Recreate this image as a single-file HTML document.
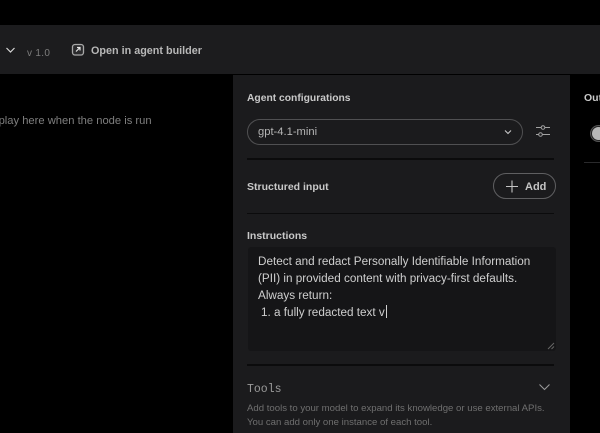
<!DOCTYPE html>
<html><head><meta charset="utf-8">
<style>
html,body{margin:0;padding:0;background:#000;}
#r{position:relative;width:600px;height:433px;overflow:hidden;background:#000;font-family:"Liberation Sans",sans-serif;filter:blur(.35px);}
#r div,#r svg{position:absolute;}
.t{white-space:nowrap;}
.h{font-size:10.5px;font-weight:700;color:#c9c9c9;line-height:14px;}
.l{height:1px;background:#0b0b0c;left:247px;width:307px;}
.b{font-size:11.72px;color:#cfcfcf;line-height:17px;left:258px;}
</style></head><body>
<div id="r">
<div style="left:0;top:25px;width:600px;height:49px;background:#1c1c1e"></div>
<div style="left:233px;top:75px;width:337px;height:358px;background:#1b1b1d"></div>

<svg style="left:5px;top:46px" width="11" height="9" viewBox="0 0 11 9"><path d="M1.5 2L5.5 6L9.5 2" fill="none" stroke="#d6d6d6" stroke-width="1.2"/></svg>
<div class="t" style="left:27px;top:47px;font-size:10px;line-height:13px;color:#7d7d7d;letter-spacing:.3px">v 1.0</div>
<svg style="left:71px;top:43px" width="14" height="14" viewBox="0 0 14 14"><rect x="1.500" y="1.500" width="11" height="10.500" rx="2.500" fill="#2a2a2c" stroke="#a8a8a8" stroke-width="1.300"/><path d="M5 8.500L9 4.500M6 4.500H9V7.500" fill="none" stroke="#e4e4e4" stroke-width="1.200"/></svg>
<div class="t" style="left:91px;top:44px;font-size:10.800px;font-weight:700;line-height:14px;color:#b8b8b8">Open in agent builder</div>

<div class="t" style="left:-9.500px;top:114px;font-size:11.200px;line-height:14px;color:#7f7f7f">isplay here when the node is run</div>

<div class="t h" style="left:247px;top:92px;font-size:10.300px">Agent configurations</div>
<div style="left:247px;top:119px;width:276px;height:26px;box-sizing:border-box;border:1px solid #505052;border-radius:13px"></div>
<div class="t" style="left:258px;top:125px;font-size:11.200px;line-height:15px;color:#b5b5b5">gpt-4.1-mini</div>
<svg style="left:503px;top:129px" width="10" height="7" viewBox="0 0 10 7"><path d="M2 1.500L5 4.500L8 1.500" fill="none" stroke="#c8c8c8" stroke-width="1.100"/></svg>
<svg style="left:535px;top:124px" width="16" height="15" viewBox="0 0 16 15"><path d="M1 3.500H6M10 3.500H15M1 10.500H3.500M7.500 10.500H15" fill="none" stroke="#a2a2a2" stroke-width="1"/><circle cx="8" cy="3.500" r="1.800" fill="none" stroke="#a2a2a2"/><circle cx="5.500" cy="10.500" r="1.800" fill="none" stroke="#a2a2a2"/></svg>
<div class="l" style="top:158px;height:1.500px"></div>

<div class="t h" style="left:247px;top:180px">Structured input</div>
<div style="left:493px;top:173px;width:63px;height:26px;box-sizing:border-box;border:1px solid #5f5f61;border-radius:13px"></div>
<svg style="left:505px;top:180px" width="14" height="13" viewBox="0 0 14 13"><path d="M7 0.500V12.500M1 6.500H13" fill="none" stroke="#c4c4c4" stroke-width="1.100"/></svg>
<div class="t" style="left:525px;top:180px;font-size:11px;font-weight:700;line-height:14px;color:#c4c4c4">Add</div>
<div class="l" style="top:213px"></div>

<div class="t h" style="left:247px;top:229px">Instructions</div>
<div style="left:248px;top:247px;width:308px;height:104px;background:#151517;border-radius:3px"></div>
<div class="t b" style="top:253px">Detect and redact Personally Identifiable Information</div>
<div class="t b" style="top:270px">(PII) in provided content with privacy-first defaults.</div>
<div class="t b" style="top:287px">Always return:</div>
<div class="t b" style="top:304px;left:261px">1. a fully redacted text v</div>
<div style="left:385.500px;top:305px;width:1px;height:13px;background:#d0d0d0"></div>
<svg style="left:547px;top:342px" width="8" height="8" viewBox="0 0 8 8"><path d="M1 7L7 1M4.500 7L7 4.500" fill="none" stroke="#666" stroke-width="1"/></svg>
<div class="l" style="top:364px;height:1.500px"></div>

<div class="t" style="left:247px;top:383px;font-family:'Liberation Mono',monospace;font-size:11.500px;line-height:14px;color:#9a9a9a">Tools</div>
<svg style="left:538px;top:383px" width="13" height="9" viewBox="0 0 13 9"><path d="M1.500 1.500L6.500 6.500L11.500 1.500" fill="none" stroke="#999" stroke-width="1.100"/></svg>
<div class="t" style="left:247px;top:402px;font-size:9.600px;line-height:14px;color:#6f6f6f">Add tools to your model to expand its knowledge or use external APIs.</div>
<div class="t" style="left:247px;top:416px;font-size:9.600px;line-height:14px;color:#6f6f6f">You can add only one instance of each tool.</div>

<div class="t" style="left:584px;top:91px;font-size:10.500px;font-weight:700;line-height:14px;color:#c9c9c9">Output</div>
<div style="left:590px;top:125px;width:30px;height:17px;box-sizing:border-box;border:1px solid #555;border-radius:9px;background:#222"></div>
<div style="left:592px;top:127px;width:13px;height:13px;border-radius:50%;background:#b8b8b8"></div>
<div style="left:584px;top:162px;width:16px;height:1px;background:#2a2a2c"></div>
</div>
</body></html>
